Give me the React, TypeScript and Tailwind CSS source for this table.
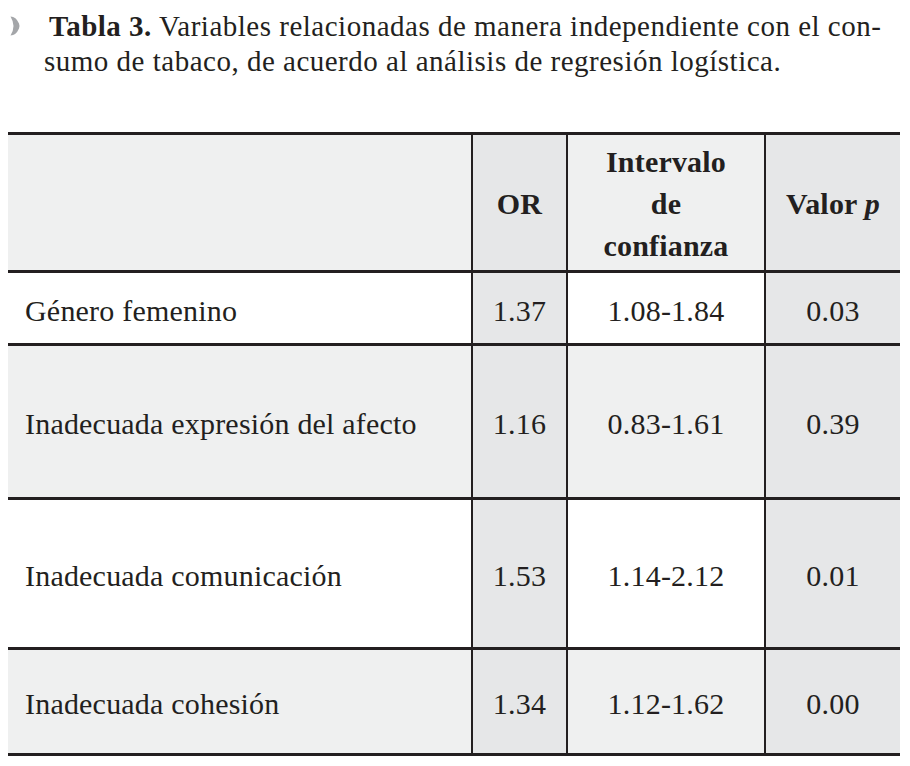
import React from 'react';

const rows = [
  { name: 'Género femenino', or: '1.37', ic: '1.08-1.84', p: '0.03', h: 'h-[73px]', shade: false },
  { name: 'Inadecuada expresión del afecto', or: '1.16', ic: '0.83-1.61', p: '0.39', h: 'h-[154px]', shade: true },
  { name: 'Inadecuada comunicación', or: '1.53', ic: '1.14-2.12', p: '0.01', h: 'h-[150px]', shade: false },
  { name: 'Inadecuada cohesión', or: '1.34', ic: '1.12-1.62', p: '0.00', h: 'h-[106px]', shade: true },
];

const App: React.FC = () => {
  return (
    <div className="w-[910px] h-[766px] bg-white text-[#231f20] font-[Liberation_Serif] overflow-hidden">
      {/* Caption */}
      <div className="flex pt-[9px] pl-[10px]">
        <svg width="11" height="20" viewBox="0 0 11 20" className="mt-[7px] mr-[23px] shrink-0">
          <path d="M0.5 0.5 Q6 0.5 9 7.5 Q10 10 9 12.5 Q6 19.5 0.5 19.5 Q3.5 14.5 3.5 10 Q3.5 5.5 0.5 0.5 Z" fill="#a4a6a9" />
        </svg>
        <p className="text-[29px] leading-[35px] tracking-[0.5px]">
          <span className="font-bold pl-[5px]">Tabla 3.</span> Variables relacionadas de manera independiente con el con-
          <br />
          sumo de tabaco, de acuerdo al análisis de regresión logística.
        </p>
      </div>

      {/* Table */}
      <table className="ml-[8px] mt-[53px] w-[892px] table-fixed border-collapse text-[30px] tracking-[0.2px]">
        <colgroup>
          <col className="w-[464px]" />
          <col className="w-[95px]" />
          <col className="w-[198px]" />
          <col className="w-[135px]" />
        </colgroup>
        <thead>
          <tr className="h-[138px] border-t-[3px] border-b-[3px] border-[#231f20]">
            <th className="bg-[#eff0f0]"></th>
            <th className="bg-[#e6e7e8] border-l-2 border-[#231f20] font-bold pt-[2px]">OR</th>
            <th className="bg-[#eff0f0] border-l-2 border-[#231f20] font-bold leading-[42px] pt-[2px]">
              Intervalo
              <br />
              de
              <br />
              confianza
            </th>
            <th className="bg-[#e6e7e8] border-l-2 border-[#231f20] font-bold pt-[2px]">
              Valor <i>p</i>
            </th>
          </tr>
        </thead>
        <tbody>
          {rows.map((r) => (
            <tr key={r.name} className={`${r.h} border-b-[3px] border-[#231f20]`}>
              <td className={`${r.shade ? 'bg-[#eff0f0]' : 'bg-white'} pl-[17px] pt-[4px] text-left`}>{r.name}</td>
              <td className="bg-[#e6e7e8] border-l-2 border-[#231f20] pt-[4px] text-center">{r.or}</td>
              <td className={`${r.shade ? 'bg-[#eff0f0]' : 'bg-white'} border-l-2 border-[#231f20] pt-[4px] text-center`}>{r.ic}</td>
              <td className="bg-[#e6e7e8] border-l-2 border-[#231f20] pt-[4px] text-center">{r.p}</td>
            </tr>
          ))}
        </tbody>
      </table>
    </div>
  );
};

export default App;
